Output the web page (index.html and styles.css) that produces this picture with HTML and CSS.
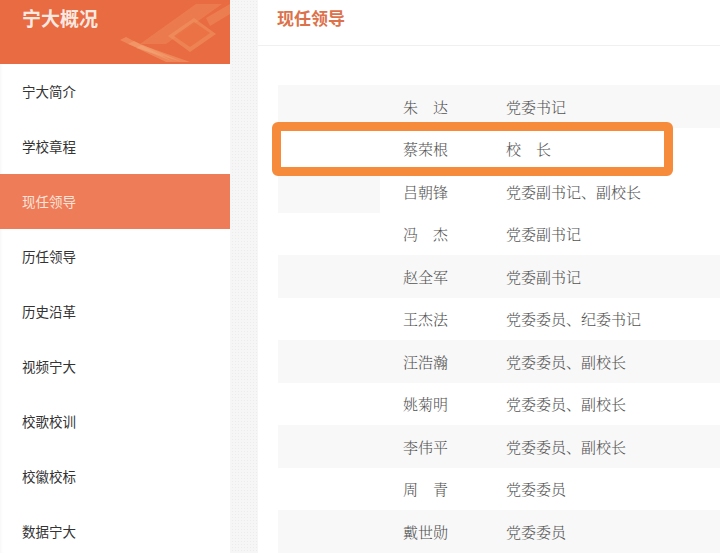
FILE: index.html
```html
<!DOCTYPE html>
<html lang="zh-CN">
  <head>
    <meta charset="utf-8">
    <title>现任领导</title>
    <link rel="stylesheet" href="styles.css">
  </head>
  <body>
    <div id="container">
      <aside id="side-nav">
        <header class="nav-header">
          <h2 class="nav-title">宁大概况</h2>
          <svg class="nav-deco" width="120" height="64" viewBox="0 0 120 64">
            <polygon points="30,44 86,4 112,4 56,44" fill="#f09a68" opacity="0.35"/>
            <polygon points="58,36 84,18 106,34 80,52" fill="#f29a66" opacity="0.5"/>
            <polygon points="64,36 84,22 100,33 80,47" fill="#e8673c" opacity="0.6"/>
            <polygon points="96,18 120,4 120,14 100,26" fill="#f3a070" opacity="0.35"/>
            <polygon points="10,40 16,37 64,62 56,62" fill="#f5a878" opacity="0.45"/>
            <polygon points="18,44 24,41 72,62 64,62" fill="#f5a878" opacity="0.45"/>
            <polygon points="26,48 32,45 80,62 72,62" fill="#f5a878" opacity="0.45"/>
          </svg>
        </header>
        <ul class="nav-list">
          <li>宁大简介</li>
          <li>学校章程</li>
          <li class="active">现任领导</li>
          <li>历任领导</li>
          <li>历史沿革</li>
          <li>视频宁大</li>
          <li>校歌校训</li>
          <li>校徽校标</li>
          <li>数据宁大</li>
        </ul>
      </aside>
      <main id="page-main">
        <header class="main-header">
          <h1 class="main-title">现任领导</h1>
        </header>
        <table class="leader-table">
          <tbody>
            <tr class="odd"><td class="blank"></td><td class="name">朱　达</td><td class="post">党委书记</td></tr>
            <tr><td class="blank"></td><td class="name">蔡荣根</td><td class="post">校　长</td></tr>
            <tr class="half"><td class="blank"></td><td class="name">吕朝锋</td><td class="post">党委副书记、副校长</td></tr>
            <tr><td class="blank"></td><td class="name">冯　杰</td><td class="post">党委副书记</td></tr>
            <tr class="odd"><td class="blank"></td><td class="name">赵全军</td><td class="post">党委副书记</td></tr>
            <tr><td class="blank"></td><td class="name">王杰法</td><td class="post">党委委员、纪委书记</td></tr>
            <tr class="odd"><td class="blank"></td><td class="name">汪浩瀚</td><td class="post">党委委员、副校长</td></tr>
            <tr><td class="blank"></td><td class="name">姚菊明</td><td class="post">党委委员、副校长</td></tr>
            <tr class="odd"><td class="blank"></td><td class="name">李伟平</td><td class="post">党委委员、副校长</td></tr>
            <tr><td class="blank"></td><td class="name">周　青</td><td class="post">党委委员</td></tr>
            <tr class="odd"><td class="blank"></td><td class="name">戴世勋</td><td class="post">党委委员</td></tr>
          </tbody>
        </table>
        <div class="mark-box"></div>
      </main>
    </div>
  </body>
</html>
```

FILE: styles.css
```css
:root {
  --orange-head: #e96b41;
  --orange-active: #ee7c59;
  --orange-title: #dc724b;
  --orange-mark: #f68b3b;
  --text: #333;
  --text-table: #555;
  --stripe: #f8f8f8;
}
html,
body {
  margin: 0;
  padding: 0;
}
body {
  width: 720px;
  height: 553px;
  overflow: hidden;
  font-family: "Noto Sans CJK SC", "Liberation Sans", sans-serif;
  color: var(--text);
  background-color: #f6f6f6;
  background-image: radial-gradient(#ececec 0.5px, transparent 0.7px);
  background-size: 3px 3px;
}
ul {
  margin: 0;
  padding: 0;
  list-style: none;
}
h1,
h2 {
  margin: 0;
}
#container {
  display: flex;
  gap: 28px;
  height: 553px;
}
#side-nav {
  width: 230px;
  flex: none;
  background-color: #fff;
  box-shadow: inset 3px 0 4px -3px rgba(0, 0, 0, 0.06);
}
.nav-header {
  position: relative;
  height: 64px;
  background-color: var(--orange-head);
  overflow: hidden;
}
.nav-title {
  position: relative;
  z-index: 1;
  padding: 4px 0 0 22px;
  font-size: 19px;
  line-height: 28px;
  font-weight: bold;
  color: #fbe9e1;
}
.nav-deco {
  position: absolute;
  right: 0;
  top: 0;
}
.nav-list li {
  height: 55px;
  padding-left: 22px;
  font-size: 13.5px;
  line-height: 55px;
  color: var(--text);
}
.nav-list li.active {
  color: #fde3d8;
  background-color: var(--orange-active);
}
#page-main {
  position: relative;
  flex: 1;
  background-color: #fff;
}
.main-header {
  height: 45px;
  border-bottom: 1px solid #f0f0f0;
}
.main-title {
  padding-left: 19px;
  font-size: 17px;
  line-height: 36px;
  color: var(--orange-title);
}
.leader-table {
  width: 442px;
  margin: 39px 0 0 20px;
  border-collapse: collapse;
  font-family: "Noto Serif CJK SC", "Noto Sans CJK SC", serif;
  font-size: 15px;
  font-weight: 300;
  color: var(--text-table);
}
.leader-table tr {
  height: 42.5px;
}
.leader-table td {
  padding: 0;
  vertical-align: middle;
}
.leader-table tr.odd {
  background-color: var(--stripe);
}
.leader-table tr.half .blank {
  background-color: var(--stripe);
}
.blank {
  width: 102px;
}
.name {
  width: 103px;
  padding-left: 23px !important;
}
.mark-box {
  position: absolute;
  left: 14px;
  top: 122px;
  width: 401px;
  height: 54px;
  box-sizing: border-box;
  border: 9px solid var(--orange-mark);
  border-radius: 6px;
}
```
